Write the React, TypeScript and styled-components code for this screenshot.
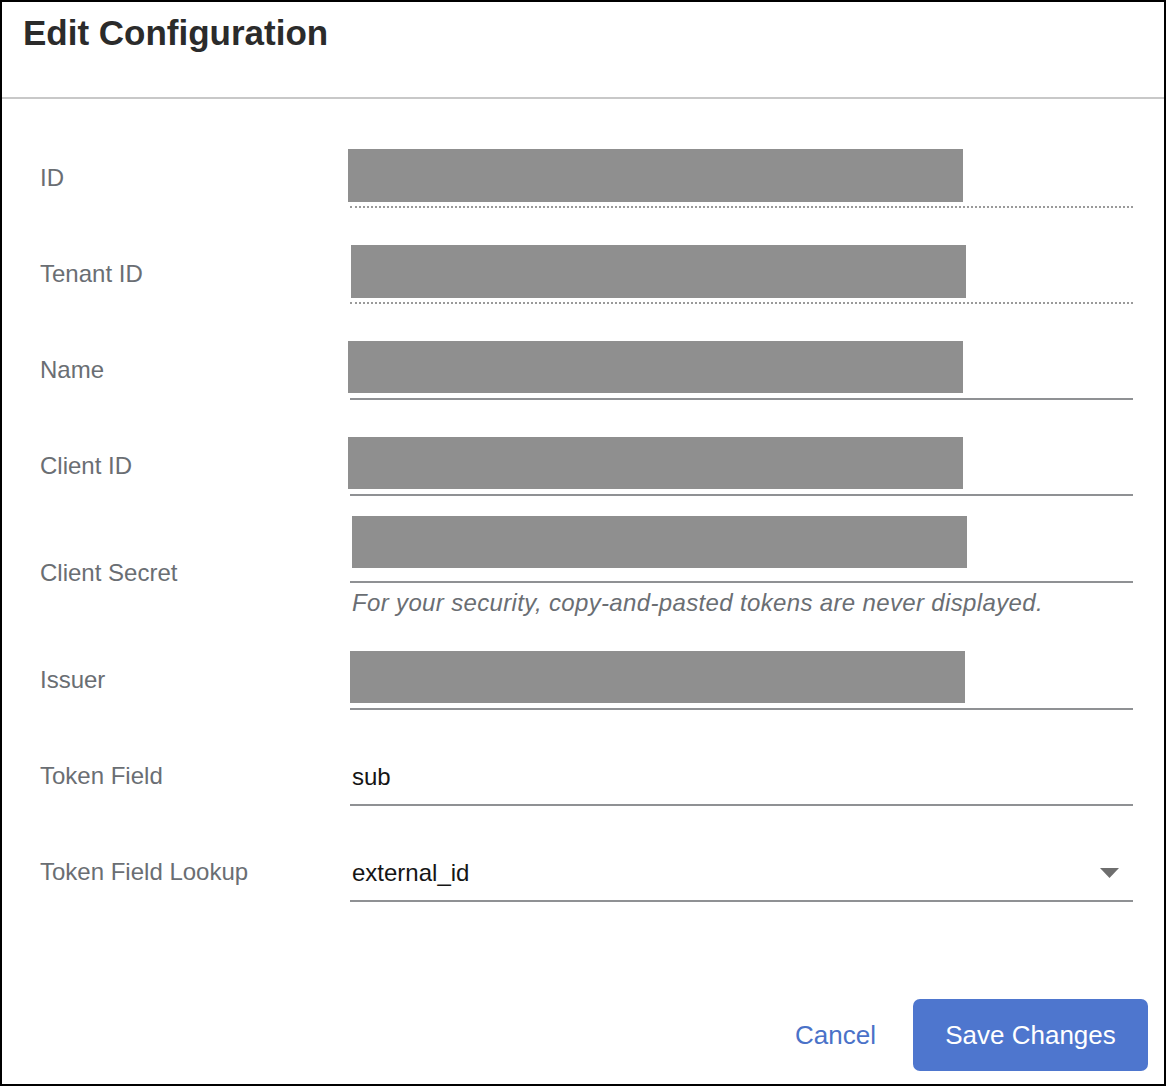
import styled, { createGlobalStyle } from "styled-components";

const GlobalStyle = createGlobalStyle`
  html, body {
    margin: 0;
    padding: 0;
    background: #ffffff;
  }
  body {
    font-family: "Liberation Sans", Arial, sans-serif;
  }
  * {
    box-sizing: border-box;
  }
`;

type Redaction = {
  left: number;
  top: number;
  width: number;
  height: number;
};

type FieldRow = {
  label: string;
  value?: string;
  readOnly?: boolean;
  select?: boolean;
  tall?: boolean;
  helper?: string;
  redaction?: Redaction;
};

const rows: FieldRow[] = [
  { label: "ID", readOnly: true, redaction: { left: -2, top: 0, width: 615, height: 53 } },
  { label: "Tenant ID", readOnly: true, redaction: { left: 1, top: 0, width: 615, height: 53 } },
  { label: "Name", redaction: { left: -2, top: 0, width: 615, height: 52 } },
  { label: "Client ID", redaction: { left: -2, top: 0, width: 615, height: 52 } },
  {
    label: "Client Secret",
    tall: true,
    helper: "For your security, copy-and-pasted tokens are never displayed.",
    redaction: { left: 2, top: 2, width: 615, height: 52 },
  },
  { label: "Issuer", redaction: { left: 0, top: 0, width: 615, height: 52 } },
  { label: "Token Field", value: "sub" },
  { label: "Token Field Lookup", value: "external_id", select: true },
];

export default function App() {
  return (
    <>
      <GlobalStyle />
      <Dialog>
        <Header>
          <Title>Edit Configuration</Title>
        </Header>
        <Body>
          {rows.map((row) => (
            <Row key={row.label}>
              <Label>{row.label}</Label>
              <FieldGroup>
                <Input $readOnly={row.readOnly} $tall={row.tall}>
                  {row.value && <Value>{row.value}</Value>}
                  {row.select && (
                    <Caret viewBox="0 0 19 10" aria-hidden="true">
                      <polygon points="0,0 19,0 9.5,10" fill="#6e6e6e" />
                    </Caret>
                  )}
                  {row.redaction && (
                    <RedactBox
                      style={{
                        left: row.redaction.left,
                        top: row.redaction.top,
                        width: row.redaction.width,
                        height: row.redaction.height,
                      }}
                    />
                  )}
                </Input>
                {row.helper && <Helper>{row.helper}</Helper>}
              </FieldGroup>
            </Row>
          ))}
        </Body>
        <Footer>
          <LinkButton type="button">Cancel</LinkButton>
          <PrimaryButton type="button">Save Changes</PrimaryButton>
        </Footer>
      </Dialog>
    </>
  );
}

const Dialog = styled.div`
  width: 1166px;
  height: 1086px;
  border: 2px solid #000000;
  background: #ffffff;
  display: flex;
  flex-direction: column;
`;

const Header = styled.div`
  height: 97px;
  padding: 11px 21px 0;
  border-bottom: 2px solid #c8c8c8;
`;

const Title = styled.h1`
  margin: 0;
  font-size: 35px;
  line-height: 40px;
  font-weight: 700;
  color: #2b2b2b;
`;

const Body = styled.div`
  flex: 1;
  padding: 31px 31px 0 38px;
`;

const Row = styled.div`
  display: grid;
  grid-template-columns: 310px 783px;
  align-items: center;
  min-height: 96px;
`;

const Label = styled.div`
  font-size: 24px;
  line-height: 30px;
  color: #6a6e73;
`;

const FieldGroup = styled.div`
  display: flex;
  flex-direction: column;
`;

const Input = styled.div<{ $readOnly?: boolean; $tall?: boolean }>`
  position: relative;
  height: ${(p) => (p.$tall ? "69px" : "59px")};
  display: flex;
  align-items: flex-end;
  justify-content: space-between;
  padding: 0 14px 12px 2px;
  border-bottom: 2px ${(p) => (p.$readOnly ? "dotted #9a9a9a" : "solid #8f9194")};
`;

const Value = styled.span`
  font-size: 24px;
  line-height: 30px;
  color: #151515;
`;

const Caret = styled.svg`
  width: 19px;
  height: 10px;
  margin-bottom: 10px;
  margin-left: auto;
`;

const RedactBox = styled.div`
  position: absolute;
  background: #8f8f8f;
`;

const Helper = styled.div`
  padding: 5px 0 14px 2px;
  font-size: 24px;
  line-height: 30px;
  font-style: italic;
  letter-spacing: 0.35px;
  color: #6a6e73;
`;

const Footer = styled.div`
  display: flex;
  justify-content: flex-end;
  align-items: center;
  gap: 21px;
  padding: 0 16px 13px;
`;

const LinkButton = styled.button`
  border: none;
  background: none;
  padding: 0 16px;
  font-family: "Liberation Sans", Arial, sans-serif;
  font-size: 26px;
  color: #4a72c8;
  cursor: pointer;
`;

const PrimaryButton = styled.button`
  width: 235px;
  height: 72px;
  border: none;
  border-radius: 7px;
  background: #4e76ce;
  color: #ffffff;
  font-family: "Liberation Sans", Arial, sans-serif;
  font-size: 26px;
  cursor: pointer;
`;
